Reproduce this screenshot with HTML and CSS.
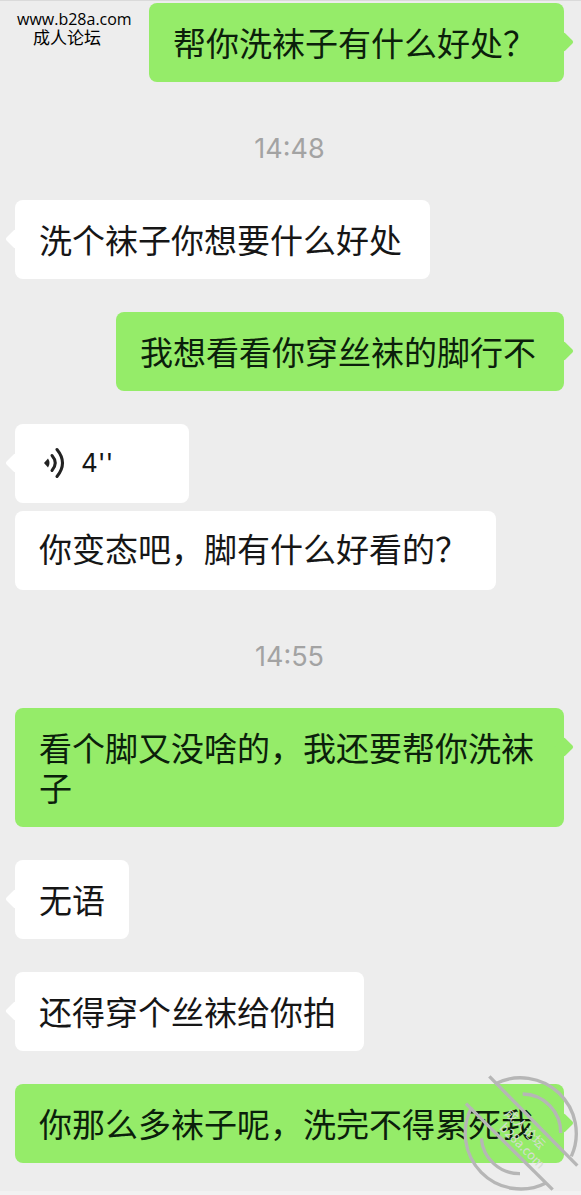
FILE: index.html
```html
<!DOCTYPE html>
<html lang="zh-CN">
<head>
<meta charset="utf-8">
<meta name="viewport" content="width=device-width, initial-scale=1">
<title>聊天</title>
<link rel="stylesheet" href="styles.css">
</head>
<body>
<main class="chat">
  <div class="site-mark">
    <p class="site-url">www.b28a.com</p>
    <p class="site-name">成人论坛</p>
  </div>
  <p class="bubble bubble--out">帮你洗袜子有什么好处？</p>
  <time class="time">14:48</time>
  <p class="bubble bubble--in">洗个袜子你想要什么好处</p>
  <p class="bubble bubble--out">我想看看你穿丝袜的脚行不</p>
  <div class="group">
    <button class="bubble bubble--in bubble--voice" type="button" aria-label="播放语音 4 秒">
      <svg class="voice-icon" viewBox="0 0 24 32" aria-hidden="true">
        <path class="voice-dot" d="M1 16 L5 11.500 Q8 16 5 20.500 Z"/>
        <path class="voice-wave" d="M9 8.500 Q15.500 16 9 23.500"/>
        <path class="voice-wave" d="M14 2.500 Q25 16 14 29.500"/>
      </svg>
      <span>4''</span>
    </button>
    <p class="bubble bubble--in bubble--plain">你变态吧，脚有什么好看的？</p>
  </div>
  <time class="time">14:55</time>
  <p class="bubble bubble--out">看个脚又没啥的，我还要帮你洗袜子</p>
  <p class="bubble bubble--in bubble--short">无语</p>
  <p class="bubble bubble--in">还得穿个丝袜给你拍</p>
  <div class="last">
    <p class="bubble bubble--out bubble--full">你那么多袜子呢，洗完不得累死我</p>
    <svg class="stamp" viewBox="66 40 354 360" aria-hidden="true">
      <g class="stamp-lines">
        <path d="M165 73 A167 167 0 0 1 394 290"/>
        <path d="M95 143 A167 167 0 0 0 318 370"/>
        <path d="M248 103 A115 115 0 0 1 362 220"/>
        <path d="M124 236 A115 115 0 0 0 240 342"/>
        <path d="M148 50 L412 318"/>
        <path d="M78 132 L338 390"/>
      </g>
      <g class="stamp-text" transform="rotate(45 243 220)">
        <text x="319" y="216">成人论坛</text>
        <text x="360" y="258">b28a.com</text>
      </g>
    </svg>
  </div>
</main>
</body>
</html>
```
FILE: styles.css
```css
* {
  box-sizing: border-box;
}

body {
  margin: 0;
  background: #ededed;
  color: #161616;
  font-family: "Noto Sans CJK SC", sans-serif;
}

p {
  margin: 0;
}

.chat {
  position: relative;
  display: flex;
  flex-direction: column;
  gap: 33px;
  min-height: 100vh;
  padding: 2px 17px 27px 15px;
  border-top: 1px solid #dadada;
  border-bottom: 4px solid #f2f2f2;
}

.site-mark {
  position: absolute;
  top: 10px;
  left: 17px;
  color: #000;
  line-height: 17px;
}

.site-url {
  font-family: "Open Sans", "Noto Sans", sans-serif;
  font-size: 16px;
}

.site-name {
  padding-left: 16px;
  font-size: 17px;
}

.bubble {
  position: relative;
  align-self: flex-start;
  padding: 19px 28px 20px 24px;
  border-radius: 8px;
  background: #fff;
  font-size: 33px;
  line-height: 40px;
}

.bubble::before {
  content: "";
  position: absolute;
  top: 32px;
  left: -7px;
  width: 14px;
  height: 14px;
  border-radius: 2px;
  background: inherit;
  transform: rotate(45deg);
}

.bubble--out {
  align-self: flex-end;
  background: #95ec69;
  color: #0b200b;
}

.bubble--out::before {
  right: -7px;
  left: auto;
}

.bubble--plain {
  padding-top: 17px;
  padding-bottom: 22px;
}

.bubble--plain::before {
  display: none;
}

.bubble--short {
  padding-right: 24px;
}

.bubble--full {
  width: 100%;
}

.bubble--voice {
  display: flex;
  align-items: center;
  gap: 14px;
  width: 174px;
  padding-left: 28px;
  border: 0;
  color: inherit;
  font-family: Inter, sans-serif;
  font-size: 26px;
  text-align: left;
}

.voice-icon {
  width: 24px;
  height: 32px;
}

.voice-dot {
  fill: #222;
}

.voice-wave {
  fill: none;
  stroke: #222;
  stroke-width: 3;
  stroke-linecap: round;
}

.group {
  display: flex;
  flex-direction: column;
  gap: 8px;
}

.time {
  align-self: center;
  padding: 18px 0 2px;
  color: #a3a3a3;
  font-family: Inter, sans-serif;
  font-size: 27px;
  line-height: 32px;
}

.last {
  position: relative;
  display: flex;
  flex-direction: column;
}

.stamp {
  position: absolute;
  right: -16px;
  bottom: -30px;
  width: 118px;
  height: 120px;
}

.stamp-lines {
  fill: none;
  stroke: #b6b6b6;
  stroke-width: 10;
}

.stamp-text {
  fill: #d6dcd2;
  font-size: 38px;
  text-anchor: end;
}
```
